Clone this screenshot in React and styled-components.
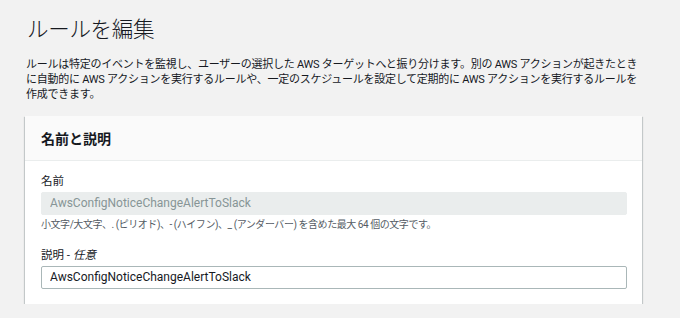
import React from 'react'
import styled, { createGlobalStyle } from 'styled-components'

const GlobalStyle = createGlobalStyle`
  html, body {
    margin: 0;
    padding: 0;
    background: #f2f2f2;
  }
  body {
    font-family: Roboto, "Noto Sans CJK JP", sans-serif;
    color: #16191f;
  }
`

function App() {
  return (
    <>
      <GlobalStyle />
      <Page>
        <Title>ルールを編集</Title>
        <Lead>
          ルールは特定のイベントを監視し、ユーザーの選択した AWS ターゲットへと振り分けます。別の AWS アクションが起きたとき<br />
          に自動的に AWS アクションを実行するルールや、一定のスケジュールを設定して定期的に AWS アクションを実行するルールを<br />
          作成できます。
        </Lead>
        <Card>
          <CardHeader>
            <CardTitle>名前と説明</CardTitle>
          </CardHeader>
          <CardBody>
            <Field>
              <Label>名前</Label>
              <Input disabled value="AwsConfigNoticeChangeAlertToSlack" readOnly />
              <Hint>小文字/大文字、. (ピリオド)、- (ハイフン)、_ (アンダーバー) を含めた最大 64 個の文字です。</Hint>
            </Field>
            <Field>
              <Label>説明 - <em>任意</em></Label>
              <Input value="AwsConfigNoticeChangeAlertToSlack" readOnly />
            </Field>
          </CardBody>
        </Card>
      </Page>
    </>
  )
}

export default App

const Page = styled.div`
  width: 617px;
  padding: 15px 0 0 25px;
`

const Title = styled.h1`
  margin: 0 0 0 2px;
  font-size: 21.5px;
  font-weight: 300;
  line-height: 30px;
  letter-spacing: -0.3px;
  color: #16191f;
`

const Lead = styled.p`
  margin: 12px 0 0 1px;
  font-size: 11px;
  line-height: 15.2px;
  letter-spacing: -0.25px;
  white-space: nowrap;
  color: #16191f;
`

const Card = styled.div`
  margin-top: 13px;
  background: #fff;
  box-shadow: 0 1px 1px 0 rgba(0, 28, 36, 0.3), 1px 1px 1px 0 rgba(0, 28, 36, 0.15), -1px 1px 1px 0 rgba(0, 28, 36, 0.15);
`

const CardHeader = styled.div`
  box-sizing: border-box;
  height: 45px;
  display: flex;
  align-items: center;
  padding: 0 16px;
  background: #fafafa;
  border-bottom: 1px solid #eaeded;
`

const CardTitle = styled.h2`
  margin: 0;
  font-size: 14px;
  font-weight: 700;
  color: #16191f;
`

const CardBody = styled.div`
  display: flex;
  flex-direction: column;
  gap: 15px;
  padding: 12px 15px 15px 16px;
`

const Field = styled.div`
  display: flex;
  flex-direction: column;
`

const Label = styled.label`
  font-size: 11.5px;
  line-height: 16px;
  color: #16191f;
  margin-bottom: 3px;

  em {
    font-style: italic;
  }
`

const Input = styled.input`
  box-sizing: border-box;
  height: 23px;
  width: 100%;
  padding: 0 8px;
  font-family: Roboto, "Noto Sans CJK JP", sans-serif;
  font-size: 12px;
  color: ${p => (p.disabled ? '#879596' : '#16191f')};
  background: ${p => (p.disabled ? '#eaeded' : '#fff')};
  border: 1px solid ${p => (p.disabled ? '#eaeded' : '#aab7b8')};
  border-radius: 2px;
  outline: none;
`

const Hint = styled.div`
  margin-top: 3px;
  font-size: 10px;
  line-height: 14px;
  letter-spacing: -0.45px;
  color: #545b64;
`
